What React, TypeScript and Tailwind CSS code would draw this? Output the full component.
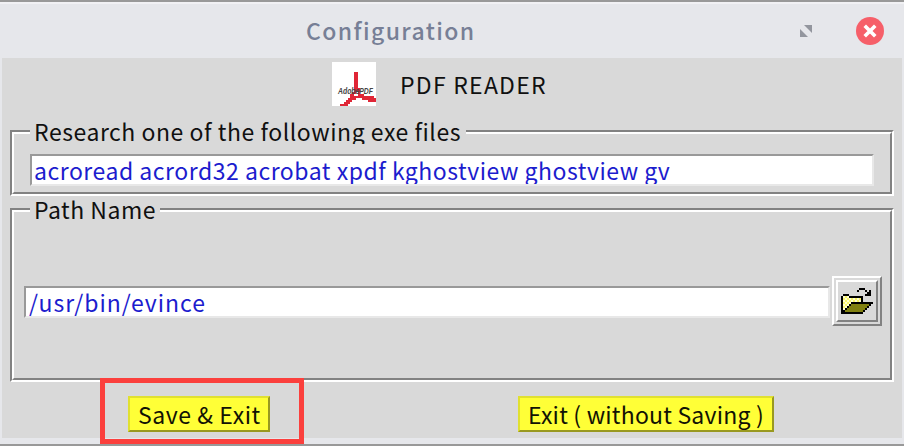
import type { ReactNode } from "react";

const FOLDER = [
  ".........###....",
  "........#...#.#.",
  ".............##.",
  ".###........###.",
  "#WYW#######.....",
  "#YWYWYWYWY#.....",
  "#WYWYWYWYW#.....",
  "#YWYW###########",
  "#WYW#ooooooooo#.",
  "#YW#ooooooooo#..",
  "#W#ooooooooo#...",
  "##ooooooooo#....",
  "###########.....",
];
const INK: Record<string, string> = { "#": "#000", W: "#ffffcf", Y: "#f8f56a", o: "#808010" };

function FolderIcon() {
  return (
    <svg width="32" height="26" viewBox="0 0 16 13" shapeRendering="crispEdges">
      {FOLDER.flatMap((row, y) =>
        [...row].map((c, x) =>
          c === "." ? null : <rect key={`${x}-${y}`} x={x} y={y} width="1" height="1" fill={INK[c]} />
        )
      )}
    </svg>
  );
}

function AdobeIcon() {
  return (
    <svg width="44" height="44" viewBox="0 0 44 44" className="bg-white">
      <path
        shapeRendering="crispEdges"
        fill="#e02636"
        d="M22 10h4v20h-4zM20 30h4v2h-4zM18 32h4v2h-4zM26 26h2v6h-2zM26 32h6v2h-6zM18 34h24v2h-24zM16 36h8v2h-8zM30 36h14v4h-8v-2h-6zM14 38h6v2h-6zM12 40h6v2h-6zM8 42h8v2h-8z"
      />
      <text x="6" y="31.5" fontSize="9" fontStyle="italic" fontWeight="bold" textLength="35" lengthAdjust="spacingAndGlyphs" fill="#444" fontFamily="Liberation Sans, sans-serif">
        AdobePDF
      </text>
    </svg>
  );
}

function Groove({ title, legendClass, className, children }: { title: ReactNode; legendClass: string; className: string; children: ReactNode }) {
  return (
    <section className={`border-2 border-t-[#828282] border-l-[#828282] border-r-white border-b-white ${className}`}>
      <div className="h-full border-2 border-t-white border-l-white border-r-[#828282] border-b-[#828282]">
        <h2 className={`relative -top-[13px] left-4 h-[23px] overflow-hidden bg-[#d9d9d9] pl-1 leading-[20px] whitespace-nowrap text-[#101010] ${legendClass}`}>
          {title}
        </h2>
        {children}
      </div>
    </section>
  );
}

const field =
  "block h-8 overflow-hidden border-2 border-t-[#999] border-l-[#999] border-r-[#e8e8e8] border-b-[#e8e8e8] bg-white leading-[28px] whitespace-nowrap text-[#1c1cce]";
const yellow =
  "h-9 border-2 border-t-[#e0e030] border-l-[#e0e030] border-r-[#999920] border-b-[#999920] bg-[#ffff37] text-left leading-[32px] whitespace-nowrap text-[#121204]";

export default function App() {
  return (
    <div className="relative flex h-[446px] w-[904px] flex-col overflow-hidden border-y-2 border-[#999] bg-[#e6e7eb] font-['Noto_Sans_CJK_SC','Noto_Sans',sans-serif] text-[23px]">
      <header className="flex h-14 shrink-0 items-center border-t-2 border-[#f1f1f4]">
        <h1 className="-mt-0.5 ml-[306px] w-[494px] text-[23px] leading-none font-medium tracking-[1.4px] text-[#777f96]">Configuration</h1>
        <svg width="12" height="12" viewBox="0 0 12 12" fill="#93969e">
          <path d="M4 0h8v8zM0 4l8 8H0z" />
        </svg>
        <svg className="ml-11" width="28" height="28" viewBox="0 0 28 28">
          <circle cx="14" cy="14" r="14" fill="#f65f69" />
          <path d="M10 10l8 8M18 10l-8 8" stroke="#fff" strokeWidth="3.6" strokeLinecap="square" />
        </svg>
      </header>
      <main className="mx-0.5 flex h-[380px] shrink-0 flex-col bg-[#d9d9d9] px-2">
        <div className="flex h-[72px] items-start pt-1 pl-[322px]">
          <AdobeIcon />
          <span className="ml-6 leading-[44px] tracking-[1.25px] text-[#101010]">PDF READER</span>
        </div>
        <Groove title="Research one of the following exe files" legendClass="w-[436px] tracking-[0.54px]" className="mr-1.5 h-[66px] w-[884px]">
          <div className={`${field} -mt-[3px] ml-4 w-[844px] pl-0.5 tracking-[0.52px]`}>acroread acrord32 acrobat xpdf kghostview ghostview gv</div>
        </Groove>
        <Groove title="Path Name" legendClass="w-[130px] tracking-[0.5px]" className="mt-3 h-[174px] w-[884px]">
          <div className="mt-[41px] ml-2.5 flex items-start">
            <div className={`${field} mt-2.5 w-[806px] pl-[3px] tracking-[0.98px]`}>/usr/bin/evince</div>
            <button className="ml-0.5 size-[50px] border-2 border-t-white border-l-white border-r-[#828282] border-b-[#828282] p-0.5">
              <span className="flex size-[42px] items-center justify-center border-2 border-t-white border-l-white border-r-[#828282] border-b-[#828282]">
                <FolderIcon />
              </span>
            </button>
          </div>
        </Groove>
        <footer className="mt-3.5 flex pl-[118px]">
          <button className={`${yellow} w-[142px] pl-2 tracking-[0.58px]`}>Save &amp; Exit</button>
          <button className={`${yellow} ml-[248px] w-[256px] pl-2 tracking-[0.2px]`}>Exit ( without Saving )</button>
        </footer>
      </main>
      <div className="pointer-events-none absolute top-[376px] left-[100px] h-[66px] w-[204px] border-5 border-[#fb403d]" />
    </div>
  );
}
